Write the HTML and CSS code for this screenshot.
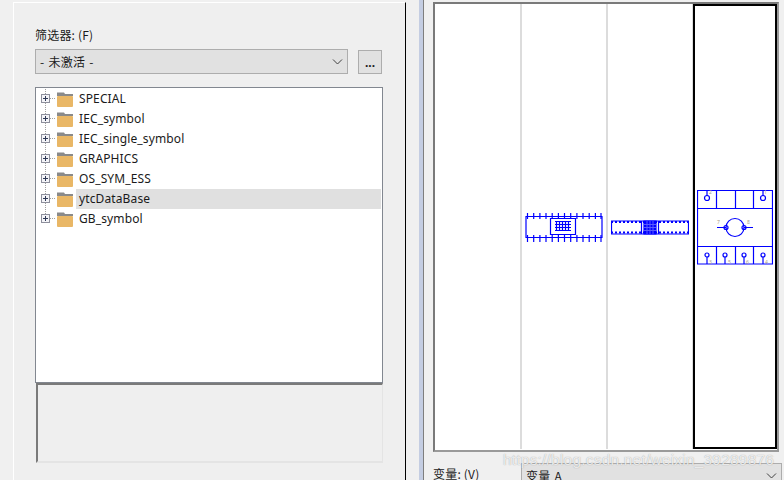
FILE: index.html
```html
<!DOCTYPE html>
<html lang="en">
  <head>
    <meta charset="UTF-8" />
    <title>符号库</title>
    <link rel="stylesheet" href="styles.css">
  </head>
  <body>
    <div class="left-pane">
      <div class="field-label">筛选器: (F)</div>
      <div class="filter-row">
        <div class="combo filter-combo">
          <span>- 未激活 -</span>
          <svg class="chevron" width="11" height="6" viewBox="0 0 11 6"><path d="M1 .5l4.5 4.5L10 .5" /></svg>
        </div>
        <div class="more-btn">...</div>
      </div>

      <div class="tree">
        <div class="tree-row">
          <svg class="tree-icons" width="36" height="20" viewBox="0 0 36 20"><use href="#lines" /><use href="#node" /></svg>
          <span class="tree-label">SPECIAL</span>
        </div>
        <div class="tree-row">
          <svg class="tree-icons" width="36" height="20" viewBox="0 0 36 20"><use href="#lines" /><use href="#node" /></svg>
          <span class="tree-label">IEC_symbol</span>
        </div>
        <div class="tree-row">
          <svg class="tree-icons" width="36" height="20" viewBox="0 0 36 20"><use href="#lines" /><use href="#node" /></svg>
          <span class="tree-label">IEC_single_symbol</span>
        </div>
        <div class="tree-row">
          <svg class="tree-icons" width="36" height="20" viewBox="0 0 36 20"><use href="#lines" /><use href="#node" /></svg>
          <span class="tree-label">GRAPHICS</span>
        </div>
        <div class="tree-row">
          <svg class="tree-icons" width="36" height="20" viewBox="0 0 36 20"><use href="#lines" /><use href="#node" /></svg>
          <span class="tree-label">OS_SYM_ESS</span>
        </div>
        <div class="tree-row">
          <svg class="tree-icons" width="36" height="20" viewBox="0 0 36 20"><use href="#lines" /><use href="#node" /></svg>
          <span class="tree-label selected">ytcDataBase</span>
        </div>
        <div class="tree-row">
          <svg class="tree-icons" width="36" height="20" viewBox="0 0 36 20"><use href="#lines-end" /><use href="#node" /></svg>
          <span class="tree-label">GB_symbol</span>
        </div>
      </div>
      <div class="preview"></div>
    </div>

    <div class="splitter"></div>

    <div class="right-pane">
      <div class="canvas">
        <div class="cell"></div>
        <div class="cell">
          <svg class="symbol" width="78" height="30" viewBox="0 0 78 30">
            <path d="M1 4.500H77V25.500H1Z M25.500 6.500H50.500V22.500H25.500Z" />
            <path d="M2.500 1v6M8.700 1v6M14.900 1v6M21 1v6M27.200 1v6M33.400 1v6M39.500 1v6M45.700 1v6M51.900 1v6M58 1v6M64.200 1v6M70.400 1v6M76 1v6" />
            <path d="M2.500 23v7M8.700 23v7M14.900 23v7M21 23v7M27.200 23v7M33.400 23v7M39.500 23v7M45.700 23v7M51.900 23v7M58 23v7M64.200 23v7M70.400 23v7M76 23v7" />
            <path class="dense" d="M30 9.500h16M30 12.500h16M30 15.500h16M30 18.500h16M31.500 9v10M34.500 9v10M37.500 9v10M40.500 9v10M43.500 9v10" />
          </svg>
        </div>
        <div class="cell">
          <svg class="symbol" width="78" height="16" viewBox="0 0 78 16">
            <path d="M.500 2H77.500V15H.500Z M30.500 2V15M47.500 2V15" />
            <path class="dashed" d="M0 3h78M0 13.500h78" />
            <path class="dense" d="M33 2h12v13H33Z" fill="#0000ff" />
            <path class="gaps" d="M33 5.500h12M33 8.500h12M33 11.500h12M36 2v13M39 2v13M42 2v13" />
          </svg>
        </div>
        <div class="cell active">
          <svg class="symbol" width="76" height="76" viewBox="0 0 76 76">
            <path d="M.500 1.500H75.500V75H.500Z M.500 19.500H75.500M.500 57.500H75.500M19.500 1.500V19.500M38.500 1.500V19.500M56.500 1.500V19.500M19.500 57.500V75M38.500 57.500V75M56.500 57.500V75" />
            <circle cx="38" cy="38.500" r="9" />
            <path d="M20 38.500H29M47 38.500H56" />
            <circle cx="29" cy="38.500" r="2" />
            <circle cx="47" cy="38.500" r="2" />
            <path d="M10 1.500V7M66 1.500V7" />
            <circle cx="10" cy="9" r="2.500" /><circle cx="66" cy="9" r="2.500" />
            <circle cx="10" cy="66" r="2" /><circle cx="28" cy="66" r="2" /><circle cx="47" cy="66" r="2" /><circle cx="66" cy="66" r="2" />
            <path d="M10 68V75M28 68V75M47 68V75M66 68V75" />
            <text x="12" y="5">2</text><text x="67" y="5">1</text>
            <text x="20" y="35">7</text><text x="50" y="35">8</text>
            <text x="12" y="75">3</text><text x="31" y="75">5</text><text x="49" y="75">6</text><text x="68" y="75">4</text>
          </svg>
        </div>
      </div>
      <div class="var-row">
        <div class="field-label var-label">变量: (V)</div>
        <div class="combo var-combo">
          <span>变量 A</span>
          <svg class="chevron" width="11" height="6" viewBox="0 0 11 6"><path d="M1 .5l4.500 4.500L10 .5" /></svg>
        </div>
      </div>
    </div>

    <div class="watermark">https://blog.csdn.net/weixin_39289876</div>

    <svg class="defs" width="0" height="0">
      <defs>
        <g id="lines">
          <path class="dots" d="M7.500 0V20M12 9.500H18" />
        </g>
        <g id="lines-end">
          <path class="dots" d="M7.500 0V10M12 9.500H18" />
        </g>
        <g id="node">
          <rect class="box" x="3.500" y="5.500" width="8" height="8" />
          <path class="plus" d="M5 9.500H10M7.500 7V12" />
          <path class="folder-tab" d="M19 3.500H26L27 5H35V7H19Z" />
          <rect class="folder" x="19" y="7" width="16" height="11" rx="1" />
        </g>
      </defs>
    </svg>
  </body>
</html>
```
FILE: styles.css
```css
* {
  box-sizing: border-box;
}

html,
body {
  height: 100%;
}

body {
  margin: 0;
  width: 784px;
  height: 480px;
  overflow: hidden;
  display: flex;
  position: relative;
  background: #f0f0f0;
  color: #1a1a1a;
  font-family: "Noto Sans", "Noto Sans CJK SC", sans-serif;
  font-size: 12px;
}

.defs {
  position: absolute;
}

.left-pane {
  width: 393px;
  height: 478px;
  margin: 2px 0 0 13px;
  padding: 23px 22px 0 21px;
  flex: none;
  background: #efefef;
  border-top: 1px solid #fff;
  border-left: 1px solid #fff;
  border-right: 1.5px solid #000;
}

.field-label {
  height: 20px;
  line-height: 18px;
  font-family: "Noto Sans CJK SC", sans-serif;
  font-size: 12px;
  letter-spacing: 0.2px;
}

.filter-row {
  display: flex;
  align-items: center;
  gap: 10px;
  margin-top: 3px;
}

.combo {
  display: flex;
  align-items: center;
  justify-content: space-between;
  background: #e1e1e1;
  border: 1px solid #adadad;
  font-family: "Noto Sans CJK SC", sans-serif;
  word-spacing: 1px;
  letter-spacing: 0.3px;
}

.filter-combo {
  width: 313px;
  height: 25px;
  padding: 0 4px 0 4px;
}

.chevron {
  fill: none;
  stroke: #404040;
  stroke-width: 1;
}

.more-btn {
  width: 24px;
  height: 24px;
  background: #e1e1e1;
  border: 1px solid #adadad;
  text-align: center;
  line-height: 23px;
  font-weight: 700;
}

.tree {
  width: 348px;
  height: 296px;
  margin-top: 13px;
  padding-top: 1px;
  background: #fff;
  border: 1px solid #828790;
}

.tree-row {
  display: flex;
  height: 20px;
  padding-left: 2px;
}

.tree-icons {
  flex: none;
}

.tree-label {
  flex: 1;
  margin-left: 2px;
  margin-right: 1px;
  padding-left: 3px;
  line-height: 20px;
  color: #1a1a1a;
  letter-spacing: 0.12px;
}

.tree-label.selected {
  background: #e0e0e0;
}

.dots {
  fill: none;
  stroke: #a0a0a0;
  stroke-width: 1;
  stroke-dasharray: 1 1;
}

.box {
  fill: #f4f4f8;
  stroke: #8d8f9c;
}

.plus {
  fill: none;
  stroke: #2f3a56;
}

.folder-tab {
  fill: #8a8a8a;
}

.folder {
  fill: #e9b766;
}

.preview {
  width: 347px;
  height: 80px;
  margin-left: 1px;
  background: #efefef;
  border-top: 2px solid #7a7a7a;
  border-left: 2px solid #7a7a7a;
  border-right: 1px solid #e4e4e4;
  border-bottom: 2px solid #e4e4e4;
}

.splitter {
  width: 5px;
  height: 100%;
  margin-left: 13px;
  flex: none;
  background: #c4cde2;
  border-right: 1px solid #7e7e7e;
}

.right-pane {
  width: 349px;
  margin-left: 9px;
  flex: none;
}

.canvas {
  display: flex;
  width: 346px;
  height: 450px;
  margin-top: 2px;
  padding: 0 0 1px 1px;
  background: #fff;
  border: 2px solid #7a7a7a;
  border-right-color: #9a9a9a;
  border-bottom-color: #9a9a9a;
}

.cell {
  display: flex;
  align-items: center;
  justify-content: center;
  width: 86px;
  flex: none;
  border-right: 2px solid #dcdcdc;
}

.cell.active {
  width: 84px;
  border: 2.500px solid #000;
  margin-left: -1px;
}

.symbol {
  fill: none;
  stroke: #0000ff;
  stroke-width: 1.200;
}

.symbol .dashed {
  stroke-width: 2;
  stroke-dasharray: 2 2;
}

.symbol .gaps {
  stroke: #5a5aff;
  stroke-width: 1;
}

.symbol text {
  fill: #a89c88;
  stroke: none;
  font-size: 5px;
}

.var-row {
  display: flex;
  margin-top: 11px;
}

.var-label {
  width: 88px;
  padding-top: 2px;
}

.var-combo {
  width: 261px;
  height: 25px;
  padding: 0 4px;
}

.watermark {
  position: absolute;
  left: 503px;
  top: 451px;
  color: rgba(255, 255, 255, 0.8);
  font-family: "Liberation Sans", sans-serif;
  font-size: 15.500px;
  letter-spacing: 0.2px;
  text-shadow: 0 0 1px rgba(90, 90, 90, 0.6);
}
```
